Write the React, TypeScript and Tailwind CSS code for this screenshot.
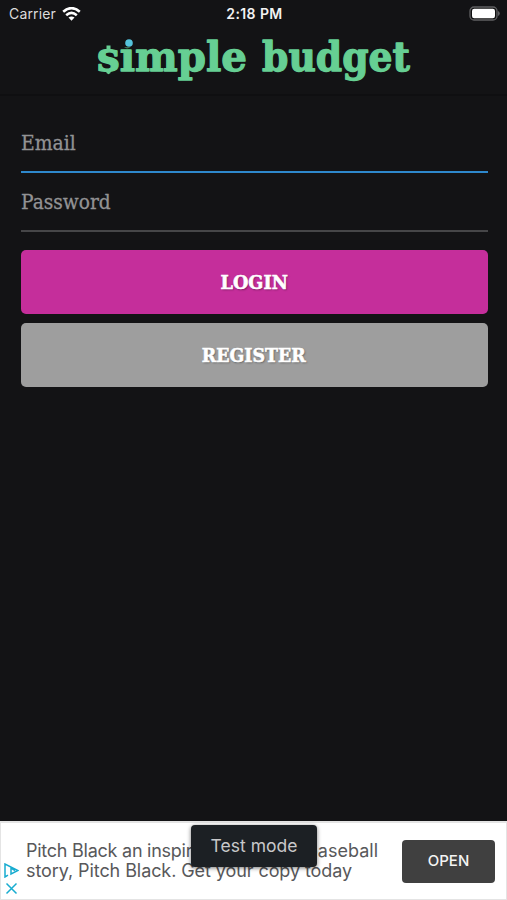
import React from "react";

function StatusBar() {
  return (
    <header className="grid h-7 grid-cols-3 items-center pl-[9px] pr-[7px] text-[14px] leading-5 text-[#f2f2f2]">
      <div className="flex items-center gap-[6px]">
        <span className="tracking-[0.15px] text-[#dcdcdc]">Carrier</span>
        <svg width="19" height="15" viewBox="0 0 19 15" fill="none" stroke="#fff" strokeWidth="2.6">
          <path d="M1.2 4.8Q9.5-2.5 17.8 4.8" />
          <path d="M4.2 8.2Q9.5 3.7 14.8 8.2" />
          <path d="M6.5 10.6Q9.5 8.2 12.5 10.6L9.5 13.7Z" fill="#fff" stroke="none" />
        </svg>
      </div>
      <span className="text-center font-semibold tracking-[0.4px]">2:18 PM</span>
      <svg className="justify-self-end" width="32" height="16" viewBox="0 0 32 16">
        <rect x="2" y="1" width="27" height="13" rx="4" fill="#111" stroke="#606062" strokeWidth="1.3" />
        <rect x="4" y="2.8" width="23" height="9.4" rx="2.2" fill="#fff" />
        <path d="M30 5Q31.8 5.8 31.8 7.5T30 10Z" fill="#606062" />
      </svg>
    </header>
  );
}

function Logo() {
  return (
    <svg className="mx-auto block overflow-visible" width="320" height="60" viewBox="0 0 320 60" fill="#66cf93">
      <g fontFamily="'DejaVu Serif', serif" fontWeight="700" fontSize="41" stroke="#66cf93" strokeWidth="1.3" strokeLinejoin="round">
        <text x="3" y="42.5" textLength="150" lengthAdjust="spacingAndGlyphs">simple</text>
        <text x="168" y="42.5" textLength="148" lengthAdjust="spacingAndGlyphs">budget</text>
      </g>
      <path d="M12.5 17.5h4v5h-4zM12.5 41h4v4l-2 1.2-2-1.2z" />
      <rect x="27" y="8" width="13" height="11.5" fill="#131315" />
      <circle cx="35" cy="15" r="3.8" fill="#55c3dc" />
    </svg>
  );
}

export default function App() {
  return (
    <main className="flex h-[900px] w-[507px] flex-col overflow-hidden bg-[#131315] font-['Inter',sans-serif]">
      <StatusBar />
      <div className="h-[68px] border-b-2 border-[#0f0f11]">
        <Logo />
      </div>

      <form className="flex flex-col pl-[20.5px] pr-[19.5px] pt-[18px] font-['DejaVu_Serif',serif]">
        <label className="flex h-[59px] items-center border-b-2 border-[#2e88cc] text-[20px] text-[#929294]">
          <span className="origin-left scale-x-[0.94] [-webkit-text-stroke:0.3px_#929294]">Email</span>
        </label>
        <label className="flex h-[59px] items-center border-b-2 border-[#464648] text-[20px] text-[#929294]">
          <span className="origin-left scale-x-[0.93] [-webkit-text-stroke:0.3px_#929294]">Password</span>
        </label>
        <button type="button" className="mt-[18px] h-[64px] rounded-[5px] bg-[#c52e9b] text-[19px] font-bold text-white [text-shadow:1px_1px_2px_#0006] [-webkit-text-stroke:0.6px_#fff]">
          <span className="inline-block scale-x-[0.93]">LOGIN</span>
        </button>
        <button type="button" className="mt-[9px] h-[64px] rounded-[5px] bg-[#9e9e9e] text-[19px] font-bold text-white [text-shadow:1px_1px_2px_#0006] [-webkit-text-stroke:0.6px_#fff]">
          <span className="inline-block scale-x-[0.915]">REGISTER</span>
        </button>
      </form>

      <footer className="relative mt-auto flex h-[79px] items-center border border-t-2 border-[#e4e4e4] bg-white pr-[11px]">
        <div className="mt-[36px] flex w-[25px] flex-col gap-1 pl-[3px]">
          <svg width="15" height="15" viewBox="0 0 15 15" fill="none" stroke="#18acd0" strokeWidth="1.5">
            <path d="M4 12.2 1 14V1l13 6.5L7 11V5l4 2.5" />
          </svg>
          <svg width="15" height="13" viewBox="0 0 15 13" stroke="#18acd0" strokeWidth="1.5">
            <path d="m2.5 1.5 10 10m0-10-10 10" />
          </svg>
        </div>
        <div className="flex w-[352px] flex-col text-[18px] leading-5 text-[#58585a]">
          <div className="flex justify-between">
            <span className="tracking-[-0.25px]">Pitch Black an inspiring</span>
            <span>baseball</span>
          </div>
          <span className="whitespace-nowrap tracking-[-0.08px]">story, Pitch Black. Get your copy today</span>
        </div>
        <button type="button" className="ml-auto h-[43px] w-[93px] rounded-[4px] bg-[#404040] text-[15px] font-medium text-[#f4f4f4]">OPEN</button>
        <div className="absolute left-[190px] top-[2px] flex h-[42px] w-[126px] items-center justify-center rounded-[4px] bg-[#1c2024] text-[17.5px] text-[#c8c8ca] shadow-[0_1px_4px_#0008]">Test mode</div>
      </footer>
    </main>
  );
}
